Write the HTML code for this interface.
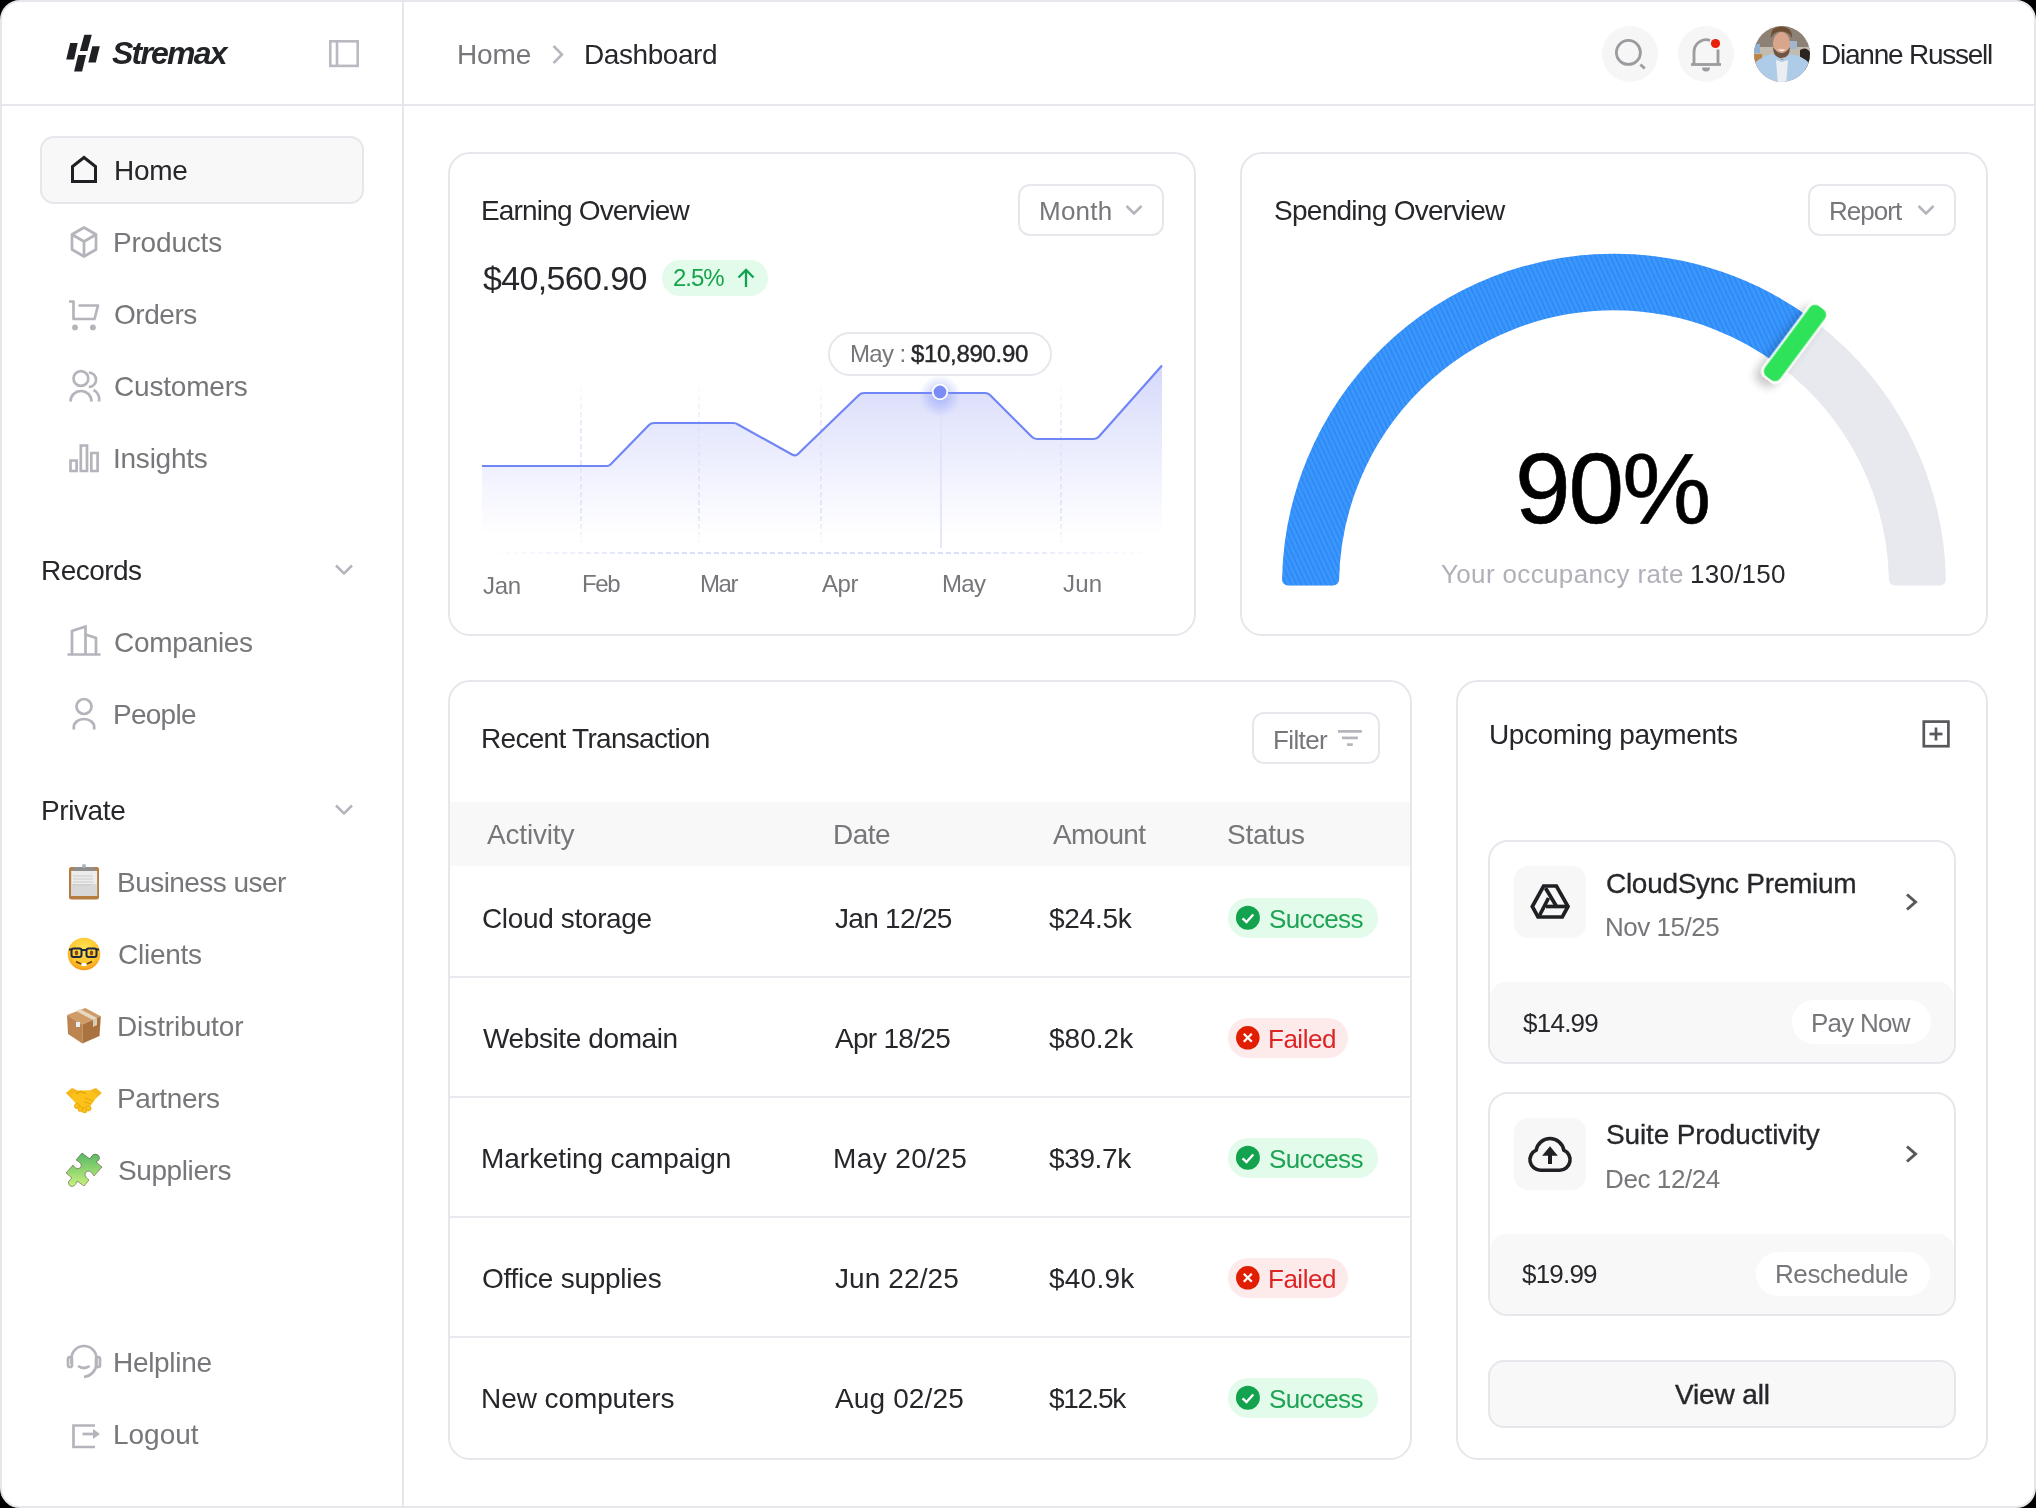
<!DOCTYPE html>
<html><head><meta charset="utf-8"><style>
html,body{margin:0;padding:0;background:#000;width:2036px;height:1508px;overflow:hidden}
.frame{position:absolute;left:0;top:0;width:2032px;height:1504px;border:2px solid #e6e7ec;border-radius:20px;background:#fff;overflow:hidden}
.b{position:absolute;box-sizing:border-box}
.t{position:absolute;white-space:nowrap;font-family:"Liberation Sans",sans-serif;will-change:transform}
svg.ov{position:absolute;left:0;top:0}
</style></head><body>
<div class="frame"></div>
<div class="b" style="left:402px;top:0;width:2px;height:1508px;background:#e6e7ec"></div>
<div class="b" style="left:0;top:104px;width:2036px;height:2px;background:#e6e7ec"></div>
<div class="b" style="left:40px;top:136px;width:324px;height:68px;border:2px solid #e6e7ec;border-radius:14px;background:#f8f8f9"></div>
<div class="b" style="left:448px;top:152px;width:748px;height:484px;border:2px solid #e6e7ec;border-radius:22px;background:#fff"></div>
<div class="b" style="left:1018px;top:184px;width:146px;height:52px;border:2px solid #e6e7ec;border-radius:12px"></div>
<div class="b" style="left:662px;top:260px;width:106px;height:36px;border-radius:18px;background:#e3fbeb"></div>
<div class="b" style="left:1240px;top:152px;width:748px;height:484px;border:2px solid #e6e7ec;border-radius:22px;background:#fff"></div>
<div class="b" style="left:1808px;top:184px;width:148px;height:52px;border:2px solid #e6e7ec;border-radius:12px"></div>
<div class="b" style="left:448px;top:680px;width:964px;height:780px;border:2px solid #e6e7ec;border-radius:22px;background:#fff"></div>
<div class="b" style="left:1252px;top:712px;width:128px;height:52px;border:2px solid #e6e7ec;border-radius:12px"></div>
<div class="b" style="left:450px;top:802px;width:960px;height:64px;background:#f8f8f8"></div>
<div class="b" style="left:450px;top:976px;width:960px;height:2px;background:#e9e9ee"></div>
<div class="b" style="left:450px;top:1096px;width:960px;height:2px;background:#e9e9ee"></div>
<div class="b" style="left:450px;top:1216px;width:960px;height:2px;background:#e9e9ee"></div>
<div class="b" style="left:450px;top:1336px;width:960px;height:2px;background:#e9e9ee"></div>
<div class="b" style="left:1228px;top:898px;width:150px;height:40px;border-radius:20px;background:#e3fbeb"></div>
<div class="b" style="left:1228px;top:1018px;width:120px;height:40px;border-radius:20px;background:#fdeaea"></div>
<div class="b" style="left:1228px;top:1138px;width:150px;height:40px;border-radius:20px;background:#e3fbeb"></div>
<div class="b" style="left:1228px;top:1258px;width:120px;height:40px;border-radius:20px;background:#fdeaea"></div>
<div class="b" style="left:1228px;top:1378px;width:150px;height:40px;border-radius:20px;background:#e3fbeb"></div>
<div class="b" style="left:1456px;top:680px;width:532px;height:780px;border:2px solid #e6e7ec;border-radius:22px;background:#fff"></div>
<div class="b" style="left:1488px;top:840px;width:468px;height:224px;border:2px solid #e6e7ec;border-radius:20px;background:#fff;overflow:hidden"><div class="b" style="left:0;top:140px;width:464px;height:82px;background:#f8f8f9;border-radius:16px 16px 0 0"></div></div>
<div class="b" style="left:1514px;top:866px;width:72px;height:72px;border-radius:14px;background:#f7f7f8"></div>
<div class="b" style="left:1792px;top:1000px;width:139px;height:44px;border-radius:22px;background:#fff"></div>
<div class="b" style="left:1488px;top:1092px;width:468px;height:224px;border:2px solid #e6e7ec;border-radius:20px;background:#fff;overflow:hidden"><div class="b" style="left:0;top:140px;width:464px;height:82px;background:#f8f8f9;border-radius:16px 16px 0 0"></div></div>
<div class="b" style="left:1514px;top:1118px;width:72px;height:72px;border-radius:14px;background:#f7f7f8"></div>
<div class="b" style="left:1756px;top:1252px;width:174px;height:44px;border-radius:22px;background:#fff"></div>
<div class="b" style="left:1488px;top:1360px;width:468px;height:68px;border:2px solid #e6e7ec;border-radius:16px;background:#f8f8f9"></div>
<div class="b" style="left:828px;top:332px;width:224px;height:44px;border:2px solid #e6e7ec;border-radius:22px;background:#fff"></div>
<div class="b" style="left:1602px;top:26px;width:56px;height:56px;border-radius:28px;background:#f6f6f7"></div>
<div class="b" style="left:1678px;top:26px;width:56px;height:56px;border-radius:28px;background:#f6f6f7"></div>

<svg class="ov" width="2036" height="1508" viewBox="0 0 2036 1508">
<defs>
  <linearGradient id="cfill" gradientUnits="userSpaceOnUse" x1="0" y1="365" x2="0" y2="535">
    <stop offset="0" stop-color="#d6d9fa"/>
    <stop offset="0.45" stop-color="#e9ebfd"/>
    <stop offset="1" stop-color="#ffffff"/>
  </linearGradient>
  <linearGradient id="vfade" gradientUnits="userSpaceOnUse" x1="0" y1="380" x2="0" y2="550">
    <stop offset="0" stop-color="#dfe2fb" stop-opacity="0"/>
    <stop offset="0.3" stop-color="#dfe2fb" stop-opacity="1"/>
    <stop offset="0.8" stop-color="#dfe2fb" stop-opacity="1"/>
    <stop offset="1" stop-color="#dfe2fb" stop-opacity="0"/>
  </linearGradient>
  <linearGradient id="hfade" gradientUnits="userSpaceOnUse" x1="490" y1="0" x2="1160" y2="0">
    <stop offset="0" stop-color="#dcdffb" stop-opacity="0"/>
    <stop offset="0.25" stop-color="#dcdffb" stop-opacity="1"/>
    <stop offset="0.7" stop-color="#dcdffb" stop-opacity="1"/>
    <stop offset="1" stop-color="#dcdffb" stop-opacity="0"/>
  </linearGradient>
  <radialGradient id="glow" cx="0.5" cy="0.5" r="0.5">
    <stop offset="0" stop-color="#7b8cf8" stop-opacity="0.55"/>
    <stop offset="1" stop-color="#7b8cf8" stop-opacity="0"/>
  </radialGradient>
  <pattern id="stripes" patternUnits="userSpaceOnUse" width="4.5" height="4.5" patternTransform="rotate(-25)">
    <rect width="4.5" height="4.5" fill="#3a97ff"/>
    <rect width="1.8" height="4.5" fill="#2f8af2"/>
  </pattern>
  <filter id="mshadow" x="-100%" y="-100%" width="300%" height="300%">
    <feGaussianBlur in="SourceAlpha" stdDeviation="5"/>
    <feOffset dx="-3" dy="7"/>
    <feComponentTransfer><feFuncA type="linear" slope="0.22"/></feComponentTransfer>
    <feMerge><feMergeNode/><feMergeNode in="SourceGraphic"/></feMerge>
  </filter>
  <clipPath id="avclip"><circle cx="1782" cy="54" r="28"/></clipPath>
</defs>

<!-- logo -->
<g fill="#1f2023">
  <polygon points="70.2,43.1 77.7,43.1 74.1,59.5 66.2,59.5"/>
  <polygon points="84.3,34.7 91.8,34.7 87.4,51.1 79.9,51.1"/>
  <polygon points="92.3,46.2 99.8,46.2 95.8,62.6 88.3,62.6"/>
  <polygon points="78.1,55.1 86.1,55.1 82.1,71.4 74.1,71.4"/>
</g>
<!-- collapse icon -->
<g fill="none" stroke="#b9b9c1" stroke-width="2.6">
  <rect x="330.3" y="41.3" width="27.4" height="24.6"/>
  <line x1="337" y1="41" x2="337" y2="66"/>
</g>
<!-- breadcrumb chevron -->
<path d="M553.5,46 L562,54.5 L553.5,63" fill="none" stroke="#b6b6be" stroke-width="2.5"/>
<!-- search -->
<g fill="none" stroke="#9c9ca0" stroke-width="2.8">
  <circle cx="1628.4" cy="52.4" r="12"/>
  <line x1="1640.4" y1="64.4" x2="1644.8" y2="68.6"/>
</g>
<!-- bell -->
<g fill="none" stroke="#9c9ca0" stroke-width="2.8">
  <path d="M1694,64 V52 A12.2,12.2 0 0 1 1710,40.3"/>
  <path d="M1718,49.5 V64"/>
  <line x1="1691" y1="64.5" x2="1721" y2="64.5"/>
</g>
<path d="M1702,67.5 H1710 A4,4 0 0 1 1702,67.5 Z" fill="#9c9ca0"/>
<circle cx="1715.5" cy="43.5" r="4.6" fill="#e8210b"/>
<!-- avatar -->
<g clip-path="url(#avclip)">
  <rect x="1750" y="22" width="64" height="64" fill="#8c8174"/>
  <rect x="1750" y="47" width="64" height="12" fill="#c2bbb0"/>
  <rect x="1754" y="44" width="6" height="9" fill="#8fb0d0"/>
  <rect x="1789" y="41" width="8" height="8" fill="#9fb6cc"/>
  <rect x="1752" y="54" width="10" height="14" fill="#b88448"/>
  <path d="M1800,50 Q1806,46 1810,52 L1812,70 L1800,70 Z" fill="#2b2521"/>
  <ellipse cx="1781.5" cy="44" rx="8.6" ry="12" fill="#d9a68c"/>
  <path d="M1771,38 Q1770,27 1781,26.5 Q1793,27 1792,38 Q1789,31 1781,31.5 Q1774,31 1771,38 Z" fill="#6f4e33"/>
  <path d="M1773,47 Q1773,58 1781.5,58 Q1790,58 1790,47 Q1786,53 1781.5,53 Q1777,53 1773,47 Z" fill="#6e5444"/>
  <path d="M1777.5,49.5 Q1781.5,52.5 1785.5,49.5 Z" fill="#fff"/>
  <path d="M1752,86 L1752,66 Q1760,56 1773,54 L1782,60 L1791,54 Q1804,56 1812,66 L1812,86 Z" fill="#aecbe8"/>
  <path d="M1776,60 L1782,62 L1788,60 L1786,86 L1778,86 Z" fill="#eaeef2"/>
</g>
<!-- sidebar icons -->
<path d="M72.5,181.5 V166.5 L84,157.5 L95.5,166.5 V181.5 Z" fill="none" stroke="#1f2023" stroke-width="3" stroke-linejoin="miter"/>
<g fill="none" stroke="#b4b4bc" stroke-width="2.7" stroke-linejoin="round">
  <path d="M84,227.5 L96,234.5 V249.5 L84,256.5 L72,249.5 V234.5 Z M72,234.5 L84,241.5 L96,234.5 M84,241.5 V256.5"/>
  <path d="M69,301.5 H73.5 V319 H94.5 L98,305.5 H78.5"/>
  <circle cx="80.9" cy="378.5" r="7.4"/>
  <path d="M70.5,401.5 A10.5,10.5 0 0 1 91.5,401.5"/>
  <path d="M88.8,372.5 A7,7 0 0 1 88.8,387"/>
  <path d="M93.5,390 A10.5,10.5 0 0 1 99,401.5"/>
  <path d="M70.5,471 V460.5 H76.6 V471 Z M80.8,471 V445.5 H87 V471 Z M91.3,471 V453 H97.6 V471 Z" stroke-linejoin="miter"/>
  <path d="M67.5,654.5 H100.5 M72,654.5 V631 L85.5,626.5 V654.5 M85.5,634.5 L96,638 V654.5" stroke-linejoin="miter"/>
  <circle cx="84" cy="706.5" r="7.5"/>
  <path d="M73.8,729.5 V727 A10.2,8 0 0 1 94.2,727 V729.5"/>
  <path d="M71.5,1364 V1358.5 A12.5,12.5 0 0 1 96.5,1358.5 V1364 A14,14 0 0 1 84,1377"/>
  <rect x="68" y="1357" width="4" height="10" rx="2"/>
  <rect x="96" y="1357" width="4" height="10" rx="2"/>
  <path d="M78,1366 Q84,1370 89.5,1366"/>
  <path d="M95,1425.5 H73.5 V1447 H95" stroke-linejoin="miter"/>
  <line x1="82.5" y1="1434" x2="94" y2="1434"/>
</g>
<g fill="#b4b4bc">
  <circle cx="75" cy="327.4" r="2.9"/>
  <circle cx="92.9" cy="327.4" r="2.9"/>
  <polygon points="93,1429 100,1434 93,1439"/>
</g>
<!-- section chevrons -->
<g fill="none" stroke="#b4b4bc" stroke-width="2.5">
  <path d="M336,565.5 L344,573.5 L352,565.5"/>
  <path d="M336,805.5 L344,813.5 L352,805.5"/>
  <path d="M1126.5,206 L1134,213.5 L1141.5,206"/>
  <path d="M1918.5,206 L1926,213.5 L1933.5,206"/>
  <line x1="1338" y1="731.4" x2="1361.8" y2="731.4" stroke-width="2.7"/>
  <line x1="1342" y1="737.9" x2="1357.9" y2="737.9" stroke-width="2.7"/>
  <line x1="1347.1" y1="744.6" x2="1352.8" y2="744.6" stroke-width="2.7"/>
</g>

<!-- emoji: clipboard -->
<g>
  <rect x="69" y="867" width="30" height="32.4" rx="2.5" fill="#b57d3f"/>
  <rect x="71.2" y="870.8" width="25.9" height="25.2" fill="#ececec"/>
  <rect x="71.2" y="884" width="25.9" height="12" fill="#d8d8d8"/>
  <g stroke="#c4c4c4" stroke-width="0.8"><line x1="73" y1="876" x2="93" y2="876"/><line x1="73" y1="879" x2="93" y2="879"/><line x1="73" y1="882" x2="93" y2="882"/><line x1="73" y1="885" x2="91" y2="885"/></g>
  <rect x="73" y="867" width="22" height="4" rx="1" fill="#8f8f8f"/>
  <circle cx="84" cy="866" r="2" fill="#aab4c0"/>
</g>
<!-- emoji: nerd face -->
<g>
  <defs><radialGradient id="face" cx="0.5" cy="0.35" r="0.65"><stop offset="0" stop-color="#ffe35a"/><stop offset="0.7" stop-color="#fdc52b"/><stop offset="1" stop-color="#f59a1b"/></radialGradient></defs>
  <circle cx="84" cy="954" r="16.3" fill="url(#face)"/>
  <g fill="none" stroke="#1d2740" stroke-width="2"><rect x="71.5" y="948.5" width="10" height="8.5" rx="2"/><rect x="86.5" y="948.5" width="10" height="8.5" rx="2"/><line x1="81.5" y1="950" x2="86.5" y2="950"/><line x1="69" y1="949.5" x2="71.5" y2="949.5"/><line x1="96.5" y1="949.5" x2="99" y2="949.5"/></g>
  <ellipse cx="76.5" cy="953" rx="1.8" ry="2.4" fill="#8a4b12"/>
  <ellipse cx="91.5" cy="953" rx="1.8" ry="2.4" fill="#8a4b12"/>
  <path d="M76,961.5 Q84,967 92,961.5" fill="none" stroke="#6b3a0a" stroke-width="1.6"/>
  <rect x="81.5" y="963" width="5" height="3" fill="#fff"/>
</g>
<!-- emoji: package -->
<g>
  <polygon points="85.3,1007.9 100.8,1016.2 82.4,1024.5 67,1015" fill="#cf9c68"/>
  <polygon points="67,1015 82.4,1024.5 82.4,1043.5 68,1034" fill="#bb8450"/>
  <polygon points="82.4,1024.5 100.8,1016.2 99.5,1036 82.4,1043.5" fill="#a9723f"/>
  <polygon points="76,1011 80,1009 97,1018 93,1020" fill="#e6d9c2"/>
  <polygon points="93,1020 97,1018 97,1025 93,1027" fill="#d8ccb6"/>
  <rect x="76" y="1022" width="4" height="5" fill="#e9eef2"/>
</g>
<!-- emoji: handshake -->
<g>
  <path d="M65.8,1093 L72,1087.9 L81,1092 L74,1101 Z" fill="#f5b719"/>
  <path d="M101.9,1093 L96,1087.9 L87,1091.5 L94,1100 Z" fill="#f5b719"/>
  <path d="M71,1095 Q77,1089 84,1090.5 Q91,1089 97,1095 Q94,1103 88,1108 Q84,1111 80,1108 Q74,1103 71,1095 Z" fill="#fcc21b"/>
  <path d="M76,1094 Q80,1090 86,1093.5" fill="none" stroke="#e0a000" stroke-width="1.2"/>
  <g fill="#fbc01a" stroke="#e3a406" stroke-width="0.7"><circle cx="77" cy="1106" r="2.6"/><circle cx="80.5" cy="1109" r="2.6"/><circle cx="84.5" cy="1110.3" r="2.6"/><circle cx="88.5" cy="1108.3" r="2.6"/></g>
  <g fill="none" stroke="#e3a406" stroke-width="0.9"><path d="M85,1098 L93,1101"/><path d="M84,1101.5 L91,1104"/></g>
</g>
<!-- emoji: puzzle -->
<g>
  <defs><linearGradient id="pz" x1="0" y1="0" x2="0" y2="1"><stop offset="0" stop-color="#58b764"/><stop offset="1" stop-color="#c8f27e"/></linearGradient></defs>
  <path d="M82,1153 L90,1159 Q93,1152 98,1155 Q102,1159 96,1162 L102,1167 L94,1176 Q90,1169 86,1172 Q83,1176 89,1180 L84,1186 L77,1181 Q75,1188 70,1186 Q66,1182 72,1178 L66,1173 L73,1165 Q76,1170 80,1168 Q84,1164 76,1160 Z" fill="url(#pz)" stroke="#4a3a2a" stroke-width="0.5"/>
</g>

<!-- earning chart -->

<path d="M482,466 L607,466 Q609,466 610.5,464.5 L649,425 Q651,423 654,423 L733,423 Q736,423 738,424.5 L792,454.5 Q795.5,456.5 798,454 L859,395 Q861,393 864,393 L985,393 Q988,393 990,395 L1031.5,436.5 Q1034,439 1037,439 L1094,439 Q1097,439 1099,436.5 L1162,365.6 L1162,550 L482,550 Z" fill="url(#cfill)"/>
<g fill="none" stroke="url(#vfade)" stroke-width="1.5" stroke-dasharray="5 3">
  <line x1="581" y1="380" x2="581" y2="548"/>
  <line x1="699" y1="380" x2="699" y2="548"/>
  <line x1="821" y1="380" x2="821" y2="548"/>
  <line x1="1061" y1="380" x2="1061" y2="548"/>
</g>
<line x1="941" y1="392" x2="941" y2="548" stroke="#dfe2fb" stroke-width="1.6"/>
<line x1="490" y1="553" x2="1160" y2="553" stroke="url(#hfade)" stroke-width="1.8" stroke-dasharray="5 3"/>
<path d="M482,466 L607,466 Q609,466 610.5,464.5 L649,425 Q651,423 654,423 L733,423 Q736,423 738,424.5 L792,454.5 Q795.5,456.5 798,454 L859,395 Q861,393 864,393 L985,393 Q988,393 990,395 L1031.5,436.5 Q1034,439 1037,439 L1094,439 Q1097,439 1099,436.5 L1162,365.6" fill="none" stroke="#7186f6" stroke-width="2.2" stroke-linejoin="round"/>
<circle cx="940" cy="396" r="21" fill="url(#glow)"/>
<circle cx="940" cy="392" r="8.2" fill="#fff"/>
<circle cx="940" cy="392" r="6.4" fill="#7b8cf8"/>
<!-- 2.5% arrow -->
<g fill="none" stroke="#0fa351" stroke-width="2.3">
  <line x1="746" y1="270" x2="746" y2="287"/>
  <path d="M738.5,277.5 L746,270 L753.5,277.5"/>
</g>

<!-- gauge -->
<clipPath id="bluecl"><path d="M1614,585.5 L1972.6,104.4 L1972.6,0 L1200,0 L1200,620 L1614,620 Z"/></clipPath>
<path d="M1288.06,579.5 A326,326 0 0 1 1939.94,579.5 L1894.94,579.5 A281,281 0 0 0 1333.06,579.5 Z" fill="#e8e9ef" stroke="#e8e9ef" stroke-width="12" stroke-linejoin="round"/>
<path d="M1288.06,579.5 A326,326 0 0 1 1939.94,579.5 L1894.94,579.5 A281,281 0 0 0 1333.06,579.5 Z" fill="url(#stripes)" stroke="url(#stripes)" stroke-width="12" stroke-linejoin="round" clip-path="url(#bluecl)"/>
<g transform="translate(1795,343) rotate(36.7)" filter="url(#mshadow)">
  <rect x="-11.5" y="-46" width="23" height="92" rx="8" fill="#fff"/>
  <rect x="-9.5" y="-44" width="19" height="88" rx="6.5" fill="#2ee35a"/>
</g>

<!-- transactions: status icons -->
<g>
  <circle cx="1247.9" cy="917.8" r="12" fill="#13a34f"/>
  <circle cx="1247.9" cy="1157.8" r="12" fill="#13a34f"/>
  <circle cx="1247.9" cy="1397.8" r="12" fill="#13a34f"/>
  <circle cx="1247.8" cy="1037.8" r="11.8" fill="#e11f00"/>
  <circle cx="1247.8" cy="1277.8" r="11.8" fill="#e11f00"/>
</g>
<g fill="none" stroke="#fff" stroke-width="2.4">
  <path d="M1242.6,918.3 L1246.5,922 L1253.3,914.5"/>
  <path d="M1242.6,1158.3 L1246.5,1162 L1253.3,1154.5"/>
  <path d="M1242.6,1398.3 L1246.5,1402 L1253.3,1394.5"/>
  <path d="M1243.8,1033.8 L1251.8,1041.8 M1251.8,1033.8 L1243.8,1041.8" stroke-width="2.3"/>
  <path d="M1243.8,1273.8 L1251.8,1281.8 M1251.8,1273.8 L1243.8,1281.8" stroke-width="2.3"/>
</g>

<!-- upcoming icons -->
<g fill="none" stroke="#58585c" stroke-width="2.7">
  <rect x="1923.8" y="721.6" width="24.6" height="24.6"/>
  <line x1="1929.5" y1="734" x2="1942.5" y2="734"/>
  <line x1="1936" y1="727.5" x2="1936" y2="740.5"/>
</g>
<g fill="none" stroke="#1f2023" stroke-width="3.7" stroke-linejoin="miter">
  <path d="M1543.6,886 L1556.4,886 L1568,906.5 L1562.3,917 L1538,917 L1532.3,906.5 Z"/>
  <path d="M1545.5,888 L1556.5,906.5"/>
  <path d="M1548.5,898 L1539.5,915.5"/>
  <path d="M1546,906.5 L1568,906.5"/>
</g>
<path d="M1540.2,1170.2 L1559.7,1170.2 A10.5,10.5 0 0 0 1563.8,1150.1 A14,14 0 0 0 1536.2,1150.1 A10.5,10.5 0 0 0 1540.2,1170.2 Z" fill="none" stroke="#1f2023" stroke-width="3.6"/>
<polygon points="1542.1,1155.8 1557.8,1155.8 1550,1146.2" fill="#1f2023"/>
<rect x="1548" y="1155" width="4" height="9" fill="#1f2023"/>
<g fill="none" stroke="#58585c" stroke-width="3">
  <path d="M1907,894.5 L1915.5,902 L1907,909.5"/>
  <path d="M1907,1146.5 L1915.5,1154 L1907,1161.5"/>
</g>

</svg>
<span class='t' style='left:111.7px;top:36.8px;font-size:32px;line-height:32px;color:#222326;font-weight:700;font-style:italic;letter-spacing:-1.80px;'>Stremax</span>
<span class='t' style='left:457.4px;top:41.2px;font-size:28px;line-height:28px;color:#77777b;font-weight:400;font-style:normal;letter-spacing:-0.11px;'>Home</span>
<span class='t' style='left:583.5px;top:41.2px;font-size:28px;line-height:28px;color:#26272a;font-weight:400;font-style:normal;letter-spacing:-0.43px;'>Dashboard</span>
<span class='t' style='left:1821.0px;top:40.7px;font-size:28px;line-height:28px;color:#26272a;font-weight:400;font-style:normal;letter-spacing:-1.23px;'>Dianne Russell</span>
<span class='t' style='left:113.8px;top:157.2px;font-size:28px;line-height:28px;color:#26272a;font-weight:400;font-style:normal;letter-spacing:-0.27px;'>Home</span>
<span class='t' style='left:113.2px;top:229.2px;font-size:28px;line-height:28px;color:#77777b;font-weight:400;font-style:normal;letter-spacing:-0.19px;'>Products</span>
<span class='t' style='left:114.2px;top:301.2px;font-size:28px;line-height:28px;color:#77777b;font-weight:400;font-style:normal;letter-spacing:-0.45px;'>Orders</span>
<span class='t' style='left:114.2px;top:373.2px;font-size:28px;line-height:28px;color:#77777b;font-weight:400;font-style:normal;letter-spacing:-0.20px;'>Customers</span>
<span class='t' style='left:113.2px;top:445.2px;font-size:28px;line-height:28px;color:#77777b;font-weight:400;font-style:normal;letter-spacing:-0.24px;'>Insights</span>
<span class='t' style='left:41.1px;top:557.1px;font-size:28px;line-height:28px;color:#26272a;font-weight:400;font-style:normal;letter-spacing:-0.53px;'>Records</span>
<span class='t' style='left:114.0px;top:628.9px;font-size:28px;line-height:28px;color:#77777b;font-weight:400;font-style:normal;letter-spacing:-0.32px;'>Companies</span>
<span class='t' style='left:113.4px;top:700.6px;font-size:28px;line-height:28px;color:#77777b;font-weight:400;font-style:normal;letter-spacing:-0.74px;'>People</span>
<span class='t' style='left:40.8px;top:797.1px;font-size:28px;line-height:28px;color:#26272a;font-weight:400;font-style:normal;letter-spacing:-0.40px;'>Private</span>
<span class='t' style='left:117.0px;top:868.9px;font-size:28px;line-height:28px;color:#77777b;font-weight:400;font-style:normal;letter-spacing:-0.54px;'>Business user</span>
<span class='t' style='left:118.0px;top:940.9px;font-size:28px;line-height:28px;color:#77777b;font-weight:400;font-style:normal;letter-spacing:-0.25px;'>Clients</span>
<span class='t' style='left:117.0px;top:1012.9px;font-size:28px;line-height:28px;color:#77777b;font-weight:400;font-style:normal;letter-spacing:-0.10px;'>Distributor</span>
<span class='t' style='left:117.0px;top:1084.9px;font-size:28px;line-height:28px;color:#77777b;font-weight:400;font-style:normal;letter-spacing:-0.40px;'>Partners</span>
<span class='t' style='left:118.0px;top:1156.9px;font-size:28px;line-height:28px;color:#77777b;font-weight:400;font-style:normal;letter-spacing:-0.40px;'>Suppliers</span>
<span class='t' style='left:113.2px;top:1348.8px;font-size:28px;line-height:28px;color:#77777b;font-weight:400;font-style:normal;letter-spacing:-0.31px;'>Helpline</span>
<span class='t' style='left:113.2px;top:1421.2px;font-size:28px;line-height:28px;color:#77777b;font-weight:400;font-style:normal;letter-spacing:-0.01px;'>Logout</span>
<span class='t' style='left:481.4px;top:197.2px;font-size:28px;line-height:28px;color:#26272a;font-weight:400;font-style:normal;letter-spacing:-0.82px;'>Earning Overview</span>
<span class='t' style='left:1039.3px;top:198.3px;font-size:26px;line-height:26px;color:#77777b;font-weight:400;font-style:normal;letter-spacing:0.22px;'>Month</span>
<span class='t' style='left:483.4px;top:261.2px;font-size:34px;line-height:34px;color:#26272a;font-weight:400;font-style:normal;letter-spacing:-0.65px;'>$40,560.90</span>
<span class='t' style='left:673.3px;top:266.3px;font-size:24px;line-height:24px;color:#16a34a;font-weight:400;font-style:normal;letter-spacing:-1.02px;'>2.5%</span>
<span class='t' style='left:849.9px;top:341.8px;font-size:24px;line-height:24px;color:#77777b;font-weight:400;font-style:normal;letter-spacing:-0.65px;'>May :</span>
<span class='t' style='left:911.4px;top:341.8px;font-size:24px;line-height:24px;color:#26272a;font-weight:400;font-style:normal;letter-spacing:-0.31px;-webkit-text-stroke:0.4px #26272a'>$10,890.90</span>
<span class='t' style='left:482.8px;top:573.6px;font-size:24px;line-height:24px;color:#77777b;font-weight:400;font-style:normal;letter-spacing:-0.27px;'>Jan</span>
<span class='t' style='left:582.4px;top:571.8px;font-size:24px;line-height:24px;color:#77777b;font-weight:400;font-style:normal;letter-spacing:-1.35px;'>Feb</span>
<span class='t' style='left:700.4px;top:571.8px;font-size:24px;line-height:24px;color:#77777b;font-weight:400;font-style:normal;letter-spacing:-1.37px;'>Mar</span>
<span class='t' style='left:822.4px;top:572.0px;font-size:24px;line-height:24px;color:#77777b;font-weight:400;font-style:normal;letter-spacing:-0.48px;'>Apr</span>
<span class='t' style='left:941.8px;top:572.0px;font-size:24px;line-height:24px;color:#77777b;font-weight:400;font-style:normal;letter-spacing:-0.72px;'>May</span>
<span class='t' style='left:1062.8px;top:572.0px;font-size:24px;line-height:24px;color:#77777b;font-weight:400;font-style:normal;letter-spacing:0.18px;'>Jun</span>
<span class='t' style='left:1274.0px;top:197.2px;font-size:28px;line-height:28px;color:#26272a;font-weight:400;font-style:normal;letter-spacing:-0.72px;'>Spending Overview</span>
<span class='t' style='left:1829.0px;top:198.3px;font-size:26px;line-height:26px;color:#77777b;font-weight:400;font-style:normal;letter-spacing:-0.96px;'>Report</span>
<span class='t' style='left:1515.0px;top:437.9px;font-size:100px;line-height:100px;color:#000;font-weight:400;font-style:normal;letter-spacing:-2.02px;-webkit-text-stroke:0.6px #000'>90%</span>
<span class='t' style='left:1441.1px;top:561.0px;font-size:26px;line-height:26px;color:#b0b0ba;font-weight:400;font-style:normal;letter-spacing:0.35px;'>Your occupancy rate</span>
<span class='t' style='left:1690.0px;top:561.0px;font-size:26px;line-height:26px;color:#26272a;font-weight:400;font-style:normal;letter-spacing:0.25px;'>130/150</span>
<span class='t' style='left:481.4px;top:725.2px;font-size:28px;line-height:28px;color:#26272a;font-weight:400;font-style:normal;letter-spacing:-0.70px;'>Recent Transaction</span>
<span class='t' style='left:1273.0px;top:726.5px;font-size:26px;line-height:26px;color:#77777b;font-weight:400;font-style:normal;letter-spacing:-0.62px;'>Filter</span>
<span class='t' style='left:486.7px;top:821.4px;font-size:28px;line-height:28px;color:#77777b;font-weight:400;font-style:normal;letter-spacing:-0.18px;'>Activity</span>
<span class='t' style='left:832.8px;top:821.4px;font-size:28px;line-height:28px;color:#77777b;font-weight:400;font-style:normal;letter-spacing:-0.52px;'>Date</span>
<span class='t' style='left:1053.0px;top:821.4px;font-size:28px;line-height:28px;color:#77777b;font-weight:400;font-style:normal;letter-spacing:-0.70px;'>Amount</span>
<span class='t' style='left:1227.2px;top:821.4px;font-size:28px;line-height:28px;color:#77777b;font-weight:400;font-style:normal;letter-spacing:-0.26px;'>Status</span>
<span class='t' style='left:482.4px;top:905.3px;font-size:28px;line-height:28px;color:#26272a;font-weight:400;font-style:normal;letter-spacing:-0.35px;'>Cloud storage</span>
<span class='t' style='left:834.8px;top:905.3px;font-size:28px;line-height:28px;color:#26272a;font-weight:400;font-style:normal;letter-spacing:-0.70px;'>Jan 12/25</span>
<span class='t' style='left:1048.8px;top:905.3px;font-size:28px;line-height:28px;color:#26272a;font-weight:400;font-style:normal;letter-spacing:-0.27px;'>$24.5k</span>
<span class='t' style='left:1269.1px;top:906.2px;font-size:26px;line-height:26px;color:#1ea354;font-weight:400;font-style:normal;letter-spacing:-0.63px;'>Success</span>
<span class='t' style='left:483.4px;top:1025.3px;font-size:28px;line-height:28px;color:#26272a;font-weight:400;font-style:normal;letter-spacing:-0.39px;'>Website domain</span>
<span class='t' style='left:834.8px;top:1025.3px;font-size:28px;line-height:28px;color:#26272a;font-weight:400;font-style:normal;letter-spacing:-0.71px;'>Apr 18/25</span>
<span class='t' style='left:1048.8px;top:1025.3px;font-size:28px;line-height:28px;color:#26272a;font-weight:400;font-style:normal;letter-spacing:0.03px;'>$80.2k</span>
<span class='t' style='left:1268.1px;top:1026.2px;font-size:26px;line-height:26px;color:#dc2626;font-weight:400;font-style:normal;letter-spacing:-0.49px;'>Failed</span>
<span class='t' style='left:481.4px;top:1145.3px;font-size:28px;line-height:28px;color:#26272a;font-weight:400;font-style:normal;letter-spacing:-0.11px;'>Marketing campaign</span>
<span class='t' style='left:832.8px;top:1145.3px;font-size:28px;line-height:28px;color:#26272a;font-weight:400;font-style:normal;letter-spacing:0.38px;'>May 20/25</span>
<span class='t' style='left:1048.8px;top:1145.3px;font-size:28px;line-height:28px;color:#26272a;font-weight:400;font-style:normal;letter-spacing:-0.37px;'>$39.7k</span>
<span class='t' style='left:1269.1px;top:1146.2px;font-size:26px;line-height:26px;color:#1ea354;font-weight:400;font-style:normal;letter-spacing:-0.63px;'>Success</span>
<span class='t' style='left:482.4px;top:1265.3px;font-size:28px;line-height:28px;color:#26272a;font-weight:400;font-style:normal;letter-spacing:-0.25px;'>Office supplies</span>
<span class='t' style='left:834.8px;top:1265.3px;font-size:28px;line-height:28px;color:#26272a;font-weight:400;font-style:normal;letter-spacing:0.10px;'>Jun 22/25</span>
<span class='t' style='left:1048.8px;top:1265.3px;font-size:28px;line-height:28px;color:#26272a;font-weight:400;font-style:normal;letter-spacing:0.23px;'>$40.9k</span>
<span class='t' style='left:1268.1px;top:1266.2px;font-size:26px;line-height:26px;color:#dc2626;font-weight:400;font-style:normal;letter-spacing:-0.49px;'>Failed</span>
<span class='t' style='left:481.4px;top:1385.3px;font-size:28px;line-height:28px;color:#26272a;font-weight:400;font-style:normal;letter-spacing:-0.08px;'>New computers</span>
<span class='t' style='left:834.8px;top:1385.3px;font-size:28px;line-height:28px;color:#26272a;font-weight:400;font-style:normal;letter-spacing:0.14px;'>Aug 02/25</span>
<span class='t' style='left:1048.8px;top:1385.3px;font-size:28px;line-height:28px;color:#26272a;font-weight:400;font-style:normal;letter-spacing:-1.37px;'>$12.5k</span>
<span class='t' style='left:1269.1px;top:1386.2px;font-size:26px;line-height:26px;color:#1ea354;font-weight:400;font-style:normal;letter-spacing:-0.63px;'>Success</span>
<span class='t' style='left:1488.8px;top:721.1px;font-size:28px;line-height:28px;color:#26272a;font-weight:400;font-style:normal;letter-spacing:-0.39px;'>Upcoming payments</span>
<span class='t' style='left:1605.9px;top:869.5px;font-size:28px;line-height:28px;color:#26272a;font-weight:400;font-style:normal;letter-spacing:-0.29px;-webkit-text-stroke:0.3px #26272a'>CloudSync Premium</span>
<span class='t' style='left:1604.9px;top:913.9px;font-size:26px;line-height:26px;color:#77777b;font-weight:400;font-style:normal;letter-spacing:-0.47px;'>Nov 15/25</span>
<span class='t' style='left:1522.9px;top:1010.2px;font-size:26px;line-height:26px;color:#26272a;font-weight:400;font-style:normal;letter-spacing:-0.75px;'>$14.99</span>
<span class='t' style='left:1811.0px;top:1010.2px;font-size:26px;line-height:26px;color:#77777b;font-weight:400;font-style:normal;letter-spacing:-0.74px;'>Pay Now</span>
<span class='t' style='left:1605.7px;top:1121.4px;font-size:28px;line-height:28px;color:#26272a;font-weight:400;font-style:normal;letter-spacing:-0.15px;-webkit-text-stroke:0.3px #26272a'>Suite Productivity</span>
<span class='t' style='left:1604.7px;top:1166.0px;font-size:26px;line-height:26px;color:#77777b;font-weight:400;font-style:normal;letter-spacing:-0.40px;'>Dec 12/24</span>
<span class='t' style='left:1522.4px;top:1261.1px;font-size:26px;line-height:26px;color:#26272a;font-weight:400;font-style:normal;letter-spacing:-0.79px;'>$19.99</span>
<span class='t' style='left:1774.8px;top:1261.1px;font-size:26px;line-height:26px;color:#77777b;font-weight:400;font-style:normal;letter-spacing:-0.42px;'>Reschedule</span>
<span class='t' style='left:1675.0px;top:1381.2px;font-size:28px;line-height:28px;color:#26272a;font-weight:400;font-style:normal;letter-spacing:-0.15px;-webkit-text-stroke:0.4px #26272a'>View all</span>
</body></html>
